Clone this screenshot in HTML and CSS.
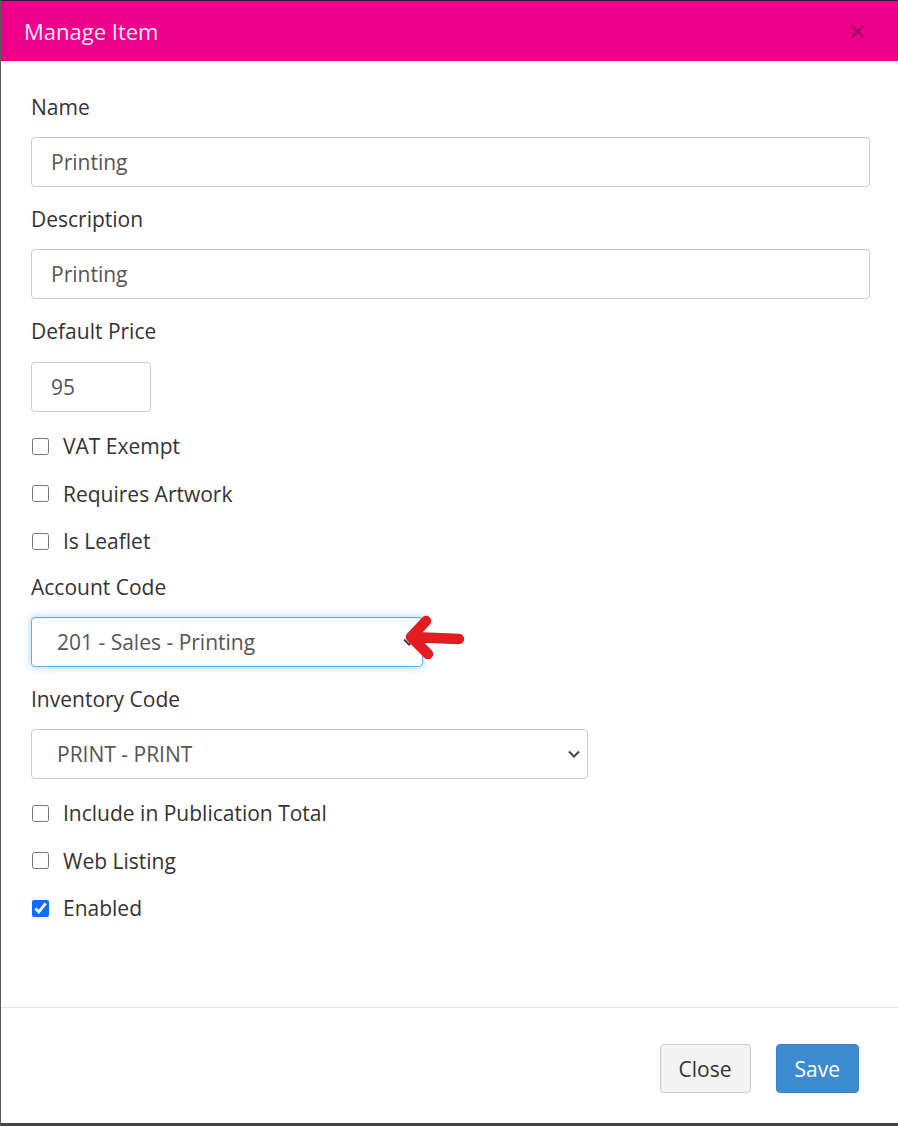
FILE: index.html
```html
<!DOCTYPE html>
<html lang="en">
<head>
  <meta charset="UTF-8" />
  <title>Manage Item</title>
  <link rel="stylesheet" href="styles.css">
</head>
<body>
  <div class="modal">
    <div class="modal-header">
      <h4 class="modal-title">Manage Item</h4>
      <button class="close" type="button" aria-label="Close">
        <svg width="15" height="15" viewBox="0 0 15 15"><path d="M1.5 1.5 L13.5 13.5 M13.5 1.5 L1.5 13.5" /></svg>
      </button>
    </div>

    <div class="modal-body">
      <div class="form-group">
        <label for="name">Name</label>
        <input type="text" id="name" class="form-control" value="Printing" />
      </div>

      <div class="form-group">
        <label for="description">Description</label>
        <input type="text" id="description" class="form-control" value="Printing" />
      </div>

      <div class="form-group">
        <label for="price">Default Price</label>
        <input type="text" id="price" class="form-control price" value="95" />
      </div>

      <div class="checks">
        <label class="check"><input type="checkbox" /> VAT Exempt</label>
        <label class="check"><input type="checkbox" /> Requires Artwork</label>
        <label class="check"><input type="checkbox" /> Is Leaflet</label>
      </div>

      <div class="form-group">
        <label for="account">Account Code</label>
        <div class="select-wrap account">
          <select id="account" class="form-control focused">
            <option>201 - Sales - Printing</option>
          </select>
          <svg class="chevron" width="12" height="8" viewBox="0 0 12 8"><path d="M1 1.5 L6 6.5 L11 1.5" /></svg>
          <svg class="marker" width="75" height="50" viewBox="0 0 75 50">
            <path d="M62 24 L14 22 M14 22 L29 6 M14 22 L31 39" />
          </svg>
        </div>
      </div>

      <div class="form-group">
        <label for="inventory">Inventory Code</label>
        <div class="select-wrap inventory">
          <select id="inventory" class="form-control">
            <option>PRINT - PRINT</option>
          </select>
          <svg class="chevron" width="12" height="8" viewBox="0 0 12 8"><path d="M1 1.5 L6 6.5 L11 1.5" /></svg>
        </div>
      </div>

      <div class="checks">
        <label class="check"><input type="checkbox" /> Include in Publication Total</label>
        <label class="check"><input type="checkbox" /> Web Listing</label>
        <label class="check"><input type="checkbox" checked /> Enabled</label>
      </div>
    </div>

    <div class="modal-footer">
      <button type="button" class="btn btn-default">Close</button>
      <button type="button" class="btn btn-primary">Save</button>
    </div>
  </div>
</body>
</html>
```

FILE: styles.css
```css
* {
  box-sizing: border-box;
}
html, body {
  margin: 0;
  height: 100%;
  background-color: #444;
}
body {
  font-family: 'Open Sans', 'Noto Sans', sans-serif;
  font-size: 21px;
  color: #333;
}
.modal {
  display: flex;
  flex-direction: column;
  height: 100vh;
  background-color: #fff;
  border-left: 1px solid #5a5a5a;
  border-top: 1px solid #3b1030;
  border-bottom: 3px solid #444;
}
.modal-header {
  height: 60px;
  flex: none;
  display: flex;
  align-items: center;
  justify-content: space-between;
  background-color: #ec008c;
  padding: 0 33px 0 23px;
}
.modal-title {
  margin: 0;
  font-weight: normal;
  font-size: 22px;
  color: #fde8f4;
}
.close {
  border: none;
  background: none;
  padding: 0;
  cursor: pointer;
  display: flex;
}
.close path {
  stroke: rgba(60, 0, 40, 0.35);
  stroke-width: 2.6;
  fill: none;
}
.modal-body {
  flex: 1;
  padding: 31px 28px 0 30px;
}
.form-group {
  margin-bottom: 17px;
}
.form-group label {
  display: block;
  line-height: 30px;
  margin-bottom: 15px;
}
.form-control {
  display: block;
  width: 100%;
  height: 50px;
  padding: 0 19px;
  font-family: inherit;
  font-size: 21px;
  color: #555;
  background-color: #fff;
  border: 1px solid #ccc;
  border-radius: 4px;
}
.price {
  width: 120px;
  margin-top: 16px;
}
.checks {
  padding-top: 2px;
  margin-bottom: 16px;
}
.check {
  display: flex;
  align-items: center;
  gap: 14px;
  line-height: 30px;
  margin-bottom: 17.5px;
  padding-left: 1px;
}
.check:last-child {
  margin-bottom: 0;
}
.check input {
  width: 17px;
  height: 17px;
  margin: 0;
  accent-color: #0d6efd;
}
.select-wrap {
  position: relative;
}
.select-wrap select {
  appearance: none;
  -webkit-appearance: none;
  padding-left: 25px;
}
.account {
  width: 392px;
}
.inventory {
  width: 557px;
}
.focused {
  border-color: #66afe9;
  box-shadow: inset 0 1px 1px rgba(0, 0, 0, 0.075), 0 0 8px rgba(102, 175, 233, 0.6);
}
.chevron {
  position: absolute;
  right: 8px;
  top: 21px;
}
.chevron path {
  stroke: #444;
  stroke-width: 2;
  fill: none;
}
.marker {
  position: absolute;
  left: 366px;
  top: -2px;
}
.marker path {
  stroke: #e31c22;
  stroke-width: 10.5;
  stroke-linecap: round;
  stroke-linejoin: round;
  fill: none;
}
.modal-footer {
  flex: none;
  display: flex;
  justify-content: flex-end;
  gap: 25px;
  border-top: 1px solid #e5e5e5;
  padding: 36px 39px 30px 0;
}
.btn {
  height: 49px;
  padding: 0 18px;
  font-family: inherit;
  font-size: 21px;
  border-radius: 4px;
  cursor: pointer;
}
.btn-default {
  background-color: #f4f4f4;
  border: 1px solid #ccc;
  color: #333;
}
.btn-primary {
  background-color: #3d8bd0;
  border: 1px solid #3a84c6;
  color: #fff;
}
```
